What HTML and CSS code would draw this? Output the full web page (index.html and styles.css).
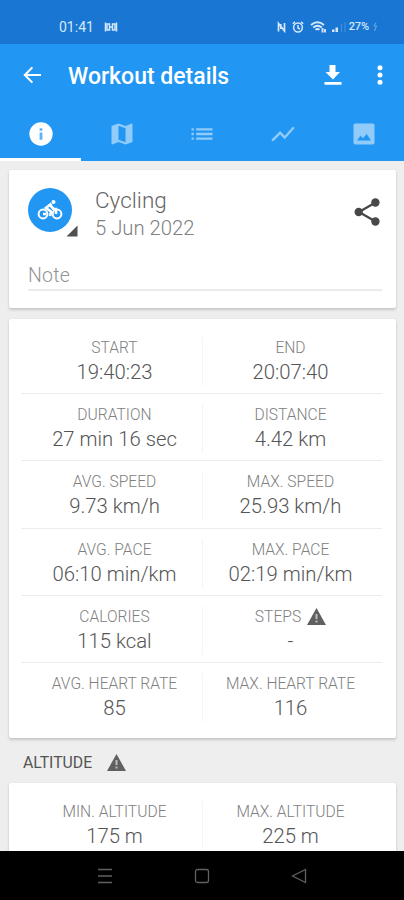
FILE: index.html
```html
<!DOCTYPE html>
<html lang="en">
<head>
<meta charset="utf-8">
<title>Workout details</title>
<link rel="stylesheet" href="styles.css">
</head>
<body>
<div class="screen">
  <div class="status">
    <span class="clock">01:41</span>
    <svg class="link" width="14" height="12" viewBox="0 0 14 12" fill="none" stroke="currentColor" stroke-width="1.500"><path d="M1.500 1.500v9M12.500 1.500v9M5.500 6h3"/><rect x="3" y="3" width="2.500" height="6"/><rect x="8.500" y="3" width="2.500" height="6"/></svg>
    <div class="tray">
      <svg width="10" height="12" viewBox="0 0 10 12" fill="none" stroke="currentColor" stroke-width="1.700"><path d="M1.500 10.500v-8l6 7.500V2M3.800 8V3"/></svg>
      <svg width="12" height="12" viewBox="0 0 12 12" fill="none" stroke="currentColor" stroke-width="1.500"><circle cx="6" cy="6.500" r="4.400"/><path d="M6 4v3l2 1M.8 2.800L3 .9M11.200 2.800L9 .9"/></svg>
      <svg class="wifi" width="16" height="12" viewBox="0 0 16 12" fill="none" stroke="currentColor" stroke-width="1.900"><path d="M1 4Q7.500-1.500 14 4M3.200 6.500Q7.500 3 11.800 6.500M5.500 8.800Q7.500 7 9.500 8.800M12.500 7v4.500M15 8v3.500"/></svg>
      <svg class="signal" width="18" height="12" viewBox="0 0 18 12" fill="currentColor"><path d="M1 8.500h2.500V11H1zM4.500 6.500H7V11H4.500z"/><path opacity=".25" d="M10 3h1v8h-1zM13.500 1h1v10h-1z"/></svg>
      <span class="battery">27%</span>
      <svg class="bolt" width="5" height="11" viewBox="0 0 5 11" fill="none" stroke="currentColor"><path d="M3 1.500L1 5h2.500L1.500 10"/></svg>
    </div>
  </div>
  <header>
    <div class="bar">
      <svg class="back" width="24" height="24" viewBox="0 0 24 24" fill="currentColor"><path d="M21 10.900H7.300l5.800-5.800L11.700 3.700 3.300 12l8.400 8.300 1.400-1.400-5.800-5.800H21z"/></svg>
      <h1>Workout details</h1>
      <svg class="download" width="18" height="22" viewBox="0 0 18 22" fill="currentColor"><path d="M5.500 1h6v7H16l-7 7.500L1.500 8h4zM.5 18h17v2.700H.5z"/></svg>
      <svg class="more" width="8" height="22" viewBox="0 0 8 22" fill="currentColor"><circle cx="4" cy="3.700" r="2.500"/><circle cx="4" cy="11" r="2.500"/><circle cx="4" cy="18.300" r="2.500"/></svg>
    </div>
    <nav>
      <a class="tab active"><svg width="28" height="28" viewBox="0 0 24 24" fill="currentColor"><path d="M12 2a10 10 0 1 0 0 20 10 10 0 0 0 0-20z"/><path class="ink" d="M10.800 10.700h2.400v6.300h-2.400zM10.800 7h2.400v2.300h-2.400z"/></svg></a>
      <a class="tab"><svg width="28" height="28" viewBox="0 0 24 24" fill="currentColor"><path d="M20.500 3l-.16.030L15 5.100 9 3 3.360 4.900c-.21.070-.36.250-.36.480V20.500c0 .28.220.5.500.5l.16-.030L9 18.900l6 2.100 5.640-1.900c.21-.070.360-.250.360-.480V3.500c0-.28-.22-.5-.5-.5zM15 19l-6-2.110V5l6 2.110V19z"/></svg></a>
      <a class="tab"><svg width="28" height="28" viewBox="0 0 24 24" fill="currentColor"><path d="M3 7h2v2H3zm0 4h2v2H3zm0 4h2v2H3zm4-8h14v2H7zm0 4h14v2H7zm0 4h14v2H7z"/></svg></a>
      <a class="tab"><svg width="28" height="28" viewBox="0 0 24 24" fill="currentColor"><path d="M3.500 18.490l6-6.010 4 4L22 6.920l-1.410-1.410-7.090 7.970-4-4L2 16.990z"/></svg></a>
      <a class="tab"><svg width="28" height="28" viewBox="0 0 24 24" fill="currentColor"><path d="M19.500 3h-15Q3 3 3 4.500v15Q3 21 4.500 21h15q1.500 0 1.500-1.500v-15Q21 3 19.500 3zM6 17.500l3-4 2.200 2.200 3.100-3.700 3.700 5.500z"/></svg></a>
    </nav>
  </header>
  <main>
    <section class="card summary">
      <div class="activity">
        <div class="badge">
          <svg width="26" height="22" viewBox="0 0 26 22" fill="none" stroke="currentColor" stroke-width="2"><circle cx="6" cy="15" r="4.400"/><circle cx="20" cy="15" r="4.400"/><circle cx="16.500" cy="3" r="2" fill="currentColor" stroke="none"/><path stroke-width="2.700" d="M14.500 4.500L9 9l5 3.500-1 4.500M13.500 6.500l3 3.500H20M6 15h3M19 11v4"/></svg>
          <svg class="corner" width="12" height="12" viewBox="0 0 12 12"><path d="M11.500.5v11H.5z"/></svg>
        </div>
        <div class="names"><div class="sport">Cycling</div><div class="date">5 Jun 2022</div></div>
        <svg class="share" width="26" height="28" viewBox="0 0 26 28" fill="currentColor" stroke="currentColor"><path fill="none" stroke-width="2.300" d="M21.500 4.500L5 14l16.500 9.500"/><g stroke="none"><circle cx="21.400" cy="4.500" r="4.200"/><circle cx="4.700" cy="14" r="4.200"/><circle cx="21.400" cy="23.500" r="4.200"/></g></svg>
      </div>
      <div class="note">Note</div>
    </section>
    <section class="card stats">
      <div class="row"><div class="cell"><div class="label">START</div><div class="value">19:40:23</div></div><div class="cell"><div class="label">END</div><div class="value">20:07:40</div></div></div>
      <div class="row"><div class="cell"><div class="label">DURATION</div><div class="value">27 min 16 sec</div></div><div class="cell"><div class="label">DISTANCE</div><div class="value">4.42 km</div></div></div>
      <div class="row"><div class="cell"><div class="label">AVG. SPEED</div><div class="value">9.73 km/h</div></div><div class="cell"><div class="label">MAX. SPEED</div><div class="value">25.93 km/h</div></div></div>
      <div class="row"><div class="cell"><div class="label">AVG. PACE</div><div class="value">06:10 min/km</div></div><div class="cell"><div class="label">MAX. PACE</div><div class="value">02:19 min/km</div></div></div>
      <div class="row"><div class="cell"><div class="label">CALORIES</div><div class="value">115 kcal</div></div><div class="cell"><div class="label">STEPS<svg class="warn" width="19" height="17" viewBox="0 0 19 17"><path d="M9.500 0L19 17H0z"/><path class="mark" d="M8.500 6h2v5h-2zM8.500 12.500h2v2h-2z"/></svg></div><div class="value">-</div></div></div>
      <div class="row"><div class="cell"><div class="label">AVG. HEART RATE</div><div class="value">85</div></div><div class="cell"><div class="label">MAX. HEART RATE</div><div class="value">116</div></div></div>
    </section>
    <h2>ALTITUDE<svg class="warn" width="19" height="17" viewBox="0 0 19 17"><path d="M9.500 0L19 17H0z"/><path class="mark" d="M8.500 6h2v5h-2zM8.500 12.500h2v2h-2z"/></svg></h2>
    <section class="card stats">
      <div class="row"><div class="cell"><div class="label">MIN. ALTITUDE</div><div class="value">175 m</div></div><div class="cell"><div class="label">MAX. ALTITUDE</div><div class="value">225 m</div></div></div>
    </section>
  </main>
  <footer>
    <svg width="16" height="16" viewBox="0 0 16 16"><path d="M1 1.500h14M1 8h14M1 14.500h14"/></svg>
    <svg width="16" height="16" viewBox="0 0 16 16"><rect x="1.500" y="1.500" width="13" height="13" rx="2"/></svg>
    <svg width="16" height="16" viewBox="0 0 16 16"><path d="M14.500 1.500v13L1.500 8z"/></svg>
  </footer>
</div>
</body>
</html>
```
FILE: styles.css
```css
* { box-sizing: border-box; }
body { margin: 0; font-family: Roboto, "Liberation Sans", sans-serif; background: #eee; }
svg { display: block; flex: none; }
.screen { width: 404px; height: 900px; overflow: hidden; display: flex; flex-direction: column; background: #eee; }
.status { height: 44px; flex: none; background: #1976d2; color: #d5e7fb; display: flex; align-items: center; padding: 9px 26px 0 59px; }
.clock { font-size: 14px; letter-spacing: 0; width: 45px; }
.tray { margin-left: auto; display: flex; align-items: center; gap: 5px; }
.wifi { margin-left: 1px; }
.signal { margin-right: -5px; }
.battery { font-size: 11px; font-weight: 500; letter-spacing: -.1px; }
.bolt { opacity: .5; margin-left: -1px; }
header { height: 117px; flex: none; background: #2196f3; color: #fff; }
.bar { height: 62px; display: flex; align-items: center; padding: 0 20px; }
h1 { margin: 3px 0 0 24px; font-size: 23px; line-height: 28px; font-weight: 500; flex: 1; white-space: nowrap; }
.more { margin-left: 34px; }
nav { display: grid; grid-template-columns: repeat(5, 1fr); height: 55px; }
.tab { display: flex; justify-content: center; align-items: center; padding: 3px 0 0 1px; border-bottom: 3px solid transparent; color: #90cbf9; }
.tab.active { color: #fff; border-color: #fff; }
.ink { fill: #5eb2f6; }
main { flex: 1; min-height: 0; overflow: hidden; padding: 9px 8px 0 9px; }
.card { background: #fff; border-radius: 2px; box-shadow: 0 2px 3px rgba(0,0,0,.16), 0 0 2px rgba(0,0,0,.07); }
.summary { height: 138px; padding: 16px 14px 0 19px; margin-bottom: 11px; }
.activity { display: flex; height: 74px; }
.badge { position: relative; width: 44px; height: 44px; margin: 2px 23px 0 0; border-radius: 50%; background: #2196f3; color: #fff; display: flex; align-items: center; justify-content: center; }
.corner { position: absolute; left: 38px; top: 37px; fill: #505050; }
.names { flex: 1; line-height: 28px; font-weight: 300; }
.sport { font-size: 22.5px; color: #666; }
.date { font-size: 20.3px; color: #808080; }
.share { color: #484848; margin: 12px 2px 0 0; }
.note { height: 31px; padding-top: 1px; border-bottom: 2px solid #ebebeb; font-size: 19.5px; line-height: 30px; font-weight: 300; color: #949494; letter-spacing: .2px; }
.stats { padding: 8px 14px 0 12px; }
.stats:nth-of-type(2) { height: 419px; }
.row { display: grid; grid-template-columns: 181px 180px; height: 67.2px; padding: 10px 0; border-bottom: 1px solid #ececec; }
.row:last-child { border: 0; }
.cell { text-align: center; padding-left: 6px; }
.cell + .cell { border-left: 1px solid #f4f4f4; padding: 0 4px 0 0; }
.label { display: flex; justify-content: center; align-items: center; gap: 6px; height: 21px; padding-top: 1px; font-size: 15.6px; font-weight: 300; color: #808080; }
.value { font-size: 20.3px; line-height: 28px; font-weight: 300; color: #555; white-space: nowrap; }
.warn { fill: #606060; margin-top: -1px; }
.mark { fill: #bbb; }
h2 { display: flex; align-items: center; gap: 15px; margin: 0; height: 45px; padding: 4px 0 0 14px; font-size: 15.8px; font-weight: 400; color: #555; }
footer { height: 49px; flex: none; background: #000; display: flex; justify-content: center; align-items: center; gap: 81px; }
footer svg { fill: none; stroke: #606060; stroke-width: 1.3; }
```
